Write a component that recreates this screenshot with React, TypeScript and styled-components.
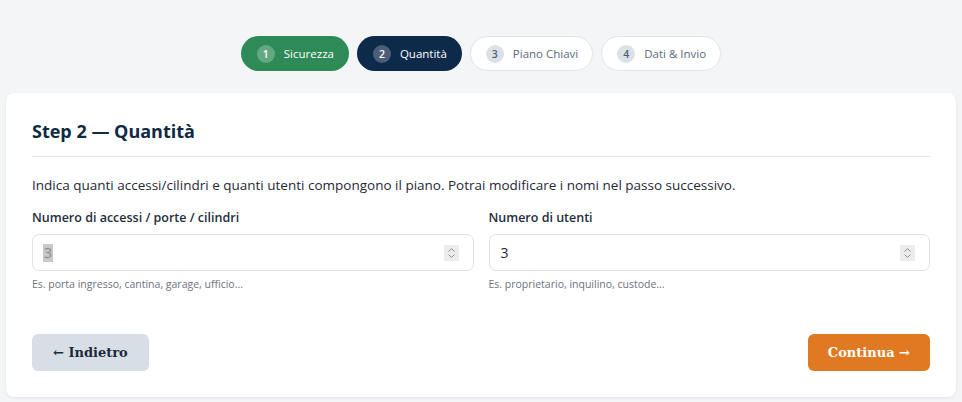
import styled, { createGlobalStyle } from "styled-components";

const GlobalStyle = createGlobalStyle`
  html, body {
    margin: 0;
    padding: 0;
    background: #f3f5f7;
    font-family: "Open Sans", "Noto Sans", sans-serif;
  }
  * { box-sizing: border-box; }
`;

const Page = styled.div`
  padding: 36px 6px 5px;
  display: flex;
  flex-direction: column;
  gap: 22px;
`;

const Stepper = styled.div`
  display: flex;
  justify-content: center;
  gap: 8px;
`;

type StepState = "done" | "active" | "todo";

const Pill = styled.div<{ $state: StepState }>`
  height: 35px;
  display: flex;
  align-items: center;
  gap: 9px;
  padding: 0 14px 0 15px;
  border-radius: 999px;
  font-size: 11.5px;
  background: ${(p) => (p.$state === "done" ? "#2e8b57" : p.$state === "active" ? "#0e2a4a" : "#ffffff")};
  color: ${(p) => (p.$state === "todo" ? "#5b6b7c" : "#ffffff")};
  border: 1px solid ${(p) => (p.$state === "todo" ? "#e1e5ea" : "transparent")};
`;

const StepNum = styled.span<{ $state: StepState }>`
  width: 18px;
  height: 18px;
  border-radius: 50%;
  display: flex;
  align-items: center;
  justify-content: center;
  font-size: 10.5px;
  font-weight: 600;
  background: ${(p) => (p.$state === "todo" ? "#dce1e8" : "rgba(255,255,255,0.25)")};
  color: ${(p) => (p.$state === "todo" ? "#4f5f70" : "#ffffff")};
`;

const Card = styled.div`
  background: #ffffff;
  border-radius: 8px;
  box-shadow: 0 1px 3px rgba(15, 23, 42, 0.08);
  padding: 26px 26px 26px;
`;

const Title = styled.h2`
  margin: 0;
  font-size: 18px;
  line-height: 24px;
  font-weight: 700;
  color: #0f2a44;
  padding-bottom: 13px;
  border-bottom: 1px solid #e3e6ea;
`;

const Desc = styled.p`
  margin: 18px 0 0;
  font-size: 13.5px;
  line-height: 20px;
  color: #1f2937;
`;

const Fields = styled.div`
  display: grid;
  grid-template-columns: 1fr 1fr;
  gap: 15px;
  margin-top: 14px;
`;

const Field = styled.div`
  display: flex;
  flex-direction: column;
`;

const Label = styled.label`
  font-size: 12.5px;
  line-height: 18px;
  font-weight: 600;
  color: #1f2d3d;
`;

const InputBox = styled.div`
  margin-top: 7px;
  height: 37px;
  border: 1px solid #dde2e8;
  border-radius: 7px;
  display: flex;
  align-items: center;
  padding: 0 14px 0 10px;
  font-size: 14px;
  color: #1f2937;
`;

const Value = styled.span<{ $selected?: boolean }>`
  flex: 1;
  display: flex;
  span {
    background: ${(p) => (p.$selected ? "#c8c8c8" : "transparent")};
    color: ${(p) => (p.$selected ? "#8a8a8a" : "#1f2937")};
    line-height: 18px;
    padding: 0 1px;
  }
`;

const Spin = styled.span`
  width: 15px;
  height: 16px;
  background: #ececec;
  display: flex;
  align-items: center;
  justify-content: center;
`;

const Hint = styled.div`
  margin-top: 6px;
  font-size: 10.5px;
  line-height: 14px;
  color: #6b7280;
`;

const Actions = styled.div`
  display: flex;
  justify-content: space-between;
  margin-top: 43px;
`;

const Button = styled.button<{ $primary?: boolean }>`
  height: 37px;
  border: none;
  border-radius: 6px;
  padding: 0 ${(p) => (p.$primary ? "20px" : "21px")};
  font-family: "DejaVu Serif", "Liberation Serif", serif;
  font-weight: 700;
  font-size: 13px;
  background: ${(p) => (p.$primary ? "#e07a22" : "#d8dee6")};
  color: ${(p) => (p.$primary ? "#ffffff" : "#1e293b")};
`;

const steps: { n: number; label: string; state: StepState }[] = [
  { n: 1, label: "Sicurezza", state: "done" },
  { n: 2, label: "Quantità", state: "active" },
  { n: 3, label: "Piano Chiavi", state: "todo" },
  { n: 4, label: "Dati & Invio", state: "todo" },
];

function Spinner() {
  return (
    <Spin>
      <svg width="9" height="12" viewBox="0 0 9 12" fill="none" stroke="#8a8f96" strokeWidth="1">
        <path d="M1.5 4.5 L4.5 1.5 L7.5 4.5" />
        <path d="M1.5 7.5 L4.5 10.5 L7.5 7.5" />
      </svg>
    </Spin>
  );
}

export default function App() {
  return (
    <Page>
      <GlobalStyle />
      <Stepper>
        {steps.map((s) => (
          <Pill key={s.n} $state={s.state}>
            <StepNum $state={s.state}>{s.n}</StepNum>
            {s.label}
          </Pill>
        ))}
      </Stepper>
      <Card>
        <Title>Step 2 — Quantità</Title>
        <Desc>
          Indica quanti accessi/cilindri e quanti utenti compongono il piano. Potrai modificare i nomi nel passo successivo.
        </Desc>
        <Fields>
          <Field>
            <Label>Numero di accessi / porte / cilindri</Label>
            <InputBox>
              <Value $selected><span>3</span></Value>
              <Spinner />
            </InputBox>
            <Hint>Es. porta ingresso, cantina, garage, ufficio...</Hint>
          </Field>
          <Field>
            <Label>Numero di utenti</Label>
            <InputBox>
              <Value><span>3</span></Value>
              <Spinner />
            </InputBox>
            <Hint>Es. proprietario, inquilino, custode...</Hint>
          </Field>
        </Fields>
        <Actions>
          <Button>← Indietro</Button>
          <Button $primary>Continua →</Button>
        </Actions>
      </Card>
    </Page>
  );
}
